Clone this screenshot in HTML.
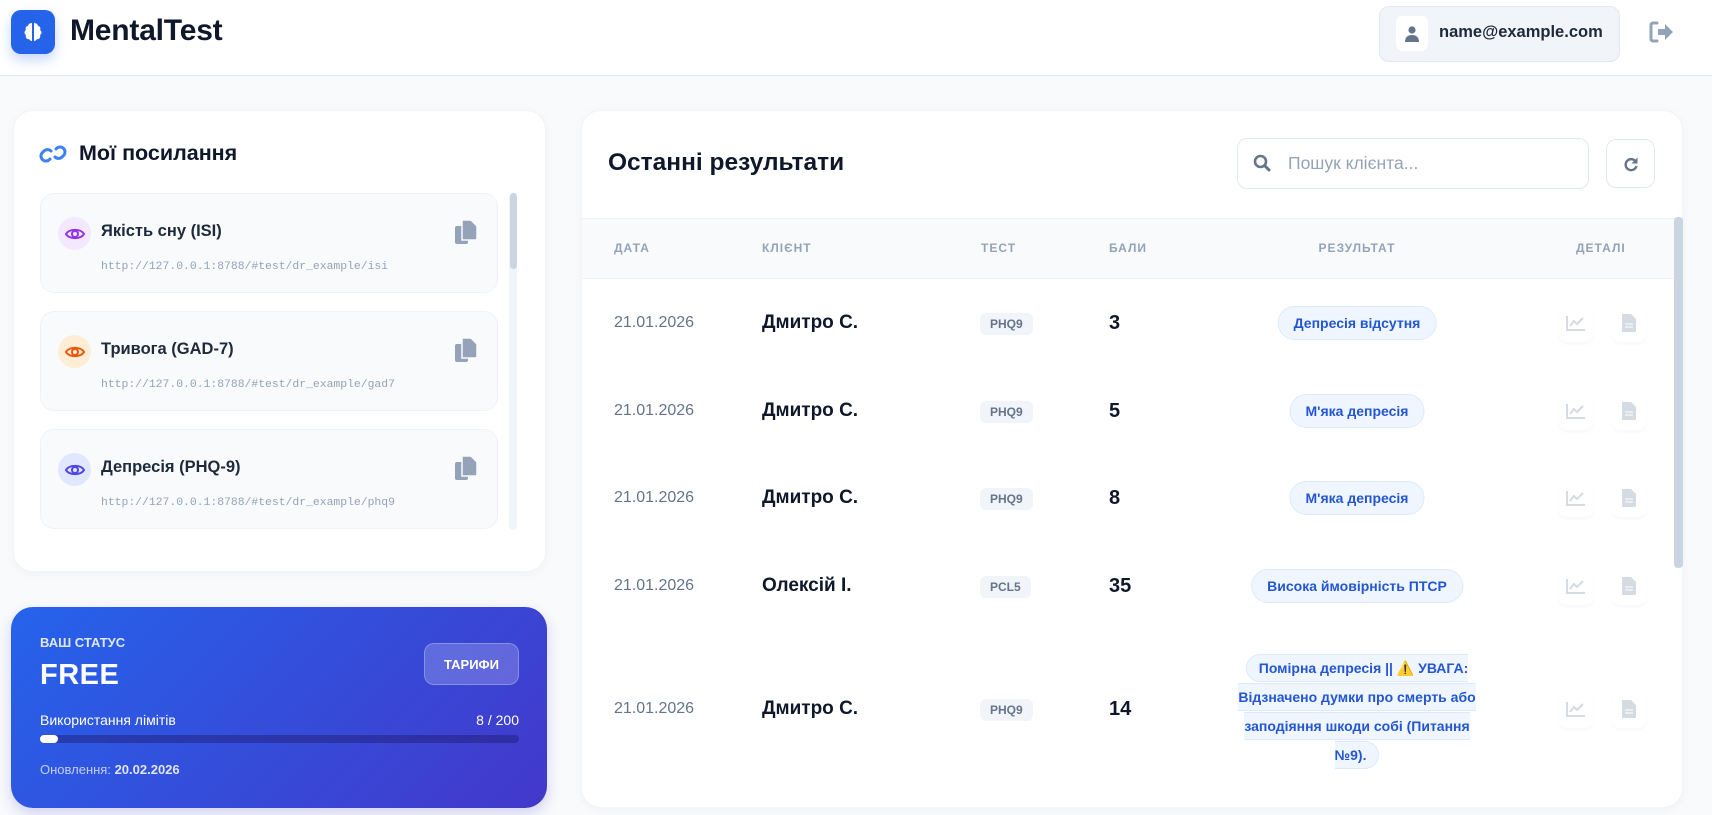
<!DOCTYPE html>
<html><head><meta charset="utf-8"><style>
*{box-sizing:border-box;margin:0;padding:0}
body{width:1712px;height:815px;overflow:hidden;background:#f8fafc;font-family:"Liberation Sans","Noto Sans CJK SC",sans-serif;color:#1e293b;position:relative}
.a{position:absolute}
.hdr{left:0;top:0;width:1712px;height:76px;background:#fff;border-bottom:1px solid #e2e8f0}
.card{background:#fff;border-radius:20px;box-shadow:0 2px 10px rgba(15,23,42,.04);border:1px solid #f1f5f9}
.item{left:40px;width:458px;height:100px;background:#f8fafc;border:1px solid #eef2f6;border-radius:14px}
.eye{left:17px;top:23px;width:33px;height:33px;border-radius:50%;display:flex;align-items:center;justify-content:center}
.it{left:60px;top:28px;font-size:16.5px;font-weight:bold;color:#1e293b}
.url{left:60px;top:67px;font-family:"Liberation Mono",monospace;font-size:11.4px;color:#94a3b8}
.cp{left:414px;top:26px}
.th{top:241px;font-size:12px;font-weight:bold;color:#94a3b8;letter-spacing:1px}
.date{font-size:16px;color:#64748b}
.name{font-size:19px;font-weight:bold;color:#0f172a}
.tb{font-size:12px;font-weight:bold;color:#64748b;background:#f1f5f9;border-radius:6px;padding:4px 10px}
.sc{font-size:20px;font-weight:bold;color:#0f172a}
.rb{font-size:14px;font-weight:bold;color:#2456d3;background:#eff6ff;border:1px solid #dbeafe;border-radius:17px;padding:8px 15px;white-space:nowrap}
.ib{width:34px;height:38px;display:flex;align-items:center;justify-content:center;border-radius:8px;box-shadow:0 2px 3px rgba(0,0,0,.03)}
</style></head><body>
<div class="a hdr"></div>
<div class="a" style="left:11px;top:10px;width:44px;height:44px;border-radius:10px;background:#2563eb;box-shadow:0 6px 12px rgba(37,99,235,.25);display:flex;align-items:center;justify-content:center">
<svg width="24" height="24" viewBox="0 0 24 24"><path d="M11 3C8 3 7 5 7 6 5 6 4 8 5 10 3 11 3 14 5 15 4 17 6 20 8 19 9 21 11 21 11 21Z M13 3C16 3 17 5 17 6 19 6 20 8 19 10 21 11 21 14 19 15 20 17 18 20 16 19 15 21 13 21 13 21Z" fill="#fff"/></svg></div>
<div class="a" style="left:70px;top:14px;font-size:30px;font-weight:bold;color:#0f172a;letter-spacing:-.2px">MentalTest</div>
<div class="a" style="left:1379px;top:6px;width:241px;height:56px;background:#f1f5f9;border:1px solid #e2e8f0;border-radius:10px"></div>
<div class="a" style="left:1396px;top:16px;width:32px;height:35px;background:#fff;border-radius:7px;display:flex;align-items:center;justify-content:center">
<svg width="14" height="16" viewBox="0 0 14 16"><circle cx="7" cy="4" r="3.6" fill="#64748b"/><path d="M0 16c0-5 3-7 7-7s7 2 7 7z" fill="#64748b"/></svg></div>
<div class="a" style="left:1439px;top:23px;font-size:16.5px;font-weight:bold;color:#1e293b">name@example.com</div>
<svg class="a" style="left:1648px;top:20px" width="26" height="24" viewBox="0 0 26 24"><path d="M9 3H5a2 2 0 0 0-2 2v14a2 2 0 0 0 2 2h4" stroke="#94a3b8" stroke-width="3" fill="none" stroke-linecap="round"/><path d="M10 9h7V4l8 8-8 8v-5h-7z" fill="#94a3b8"/></svg>

<!-- left card -->
<div class="a card" style="left:13px;top:110px;width:533px;height:462px"></div>
<svg class="a" style="left:39px;top:142px" width="28" height="24" viewBox="0 0 28 24"><g fill="none" stroke="#3b82f6" stroke-width="3" stroke-linecap="round"><path d="M12 9a5 5 0 0 0-7 0l-2 2a5 5 0 0 0 7 7l1-1"/><path d="M16 15a5 5 0 0 0 7 0l2-2a5 5 0 0 0-7-7l-1 1"/></g></svg>
<div class="a" style="left:79px;top:141px;font-size:21.5px;font-weight:bold;color:#0f172a">Мої посилання</div>

<div class="a item" style="top:193px"><div class="a eye" style="background:#f3e8ff"><svg width="20" height="14" viewBox="0 0 20 14"><path d="M1 7C4 1.5 16 1.5 19 7 16 12.5 4 12.5 1 7z" fill="none" stroke="#9333ea" stroke-width="2"/><circle cx="10" cy="7" r="3" fill="none" stroke="#9333ea" stroke-width="2"/></svg></div><div class="a it">Якість сну (ISI)</div><div class="a url">http://127.0.0.1:8788/#test/dr_example/isi</div><svg class="a cp" width="22" height="24" viewBox="0 0 22 24"><rect x="0" y="6" width="13" height="18" rx="2" fill="#94a3b8"/><path d="M7 0h9l6 6v12a2 2 0 0 1-2 2h-13z" fill="#94a3b8" stroke="#f8fafc" stroke-width="1.5"/></svg></div>
<div class="a item" style="top:311px"><div class="a eye" style="background:#ffedd5"><svg width="20" height="14" viewBox="0 0 20 14"><path d="M1 7C4 1.5 16 1.5 19 7 16 12.5 4 12.5 1 7z" fill="none" stroke="#ea580c" stroke-width="2"/><circle cx="10" cy="7" r="3" fill="none" stroke="#ea580c" stroke-width="2"/></svg></div><div class="a it">Тривога (GAD-7)</div><div class="a url">http://127.0.0.1:8788/#test/dr_example/gad7</div><svg class="a cp" width="22" height="24" viewBox="0 0 22 24"><rect x="0" y="6" width="13" height="18" rx="2" fill="#94a3b8"/><path d="M7 0h9l6 6v12a2 2 0 0 1-2 2h-13z" fill="#94a3b8" stroke="#f8fafc" stroke-width="1.5"/></svg></div>
<div class="a item" style="top:429px"><div class="a eye" style="background:#e0e7ff"><svg width="20" height="14" viewBox="0 0 20 14"><path d="M1 7C4 1.5 16 1.5 19 7 16 12.5 4 12.5 1 7z" fill="none" stroke="#4f46e5" stroke-width="2"/><circle cx="10" cy="7" r="3" fill="none" stroke="#4f46e5" stroke-width="2"/></svg></div><div class="a it">Депресія (PHQ-9)</div><div class="a url">http://127.0.0.1:8788/#test/dr_example/phq9</div><svg class="a cp" width="22" height="24" viewBox="0 0 22 24"><rect x="0" y="6" width="13" height="18" rx="2" fill="#94a3b8"/><path d="M7 0h9l6 6v12a2 2 0 0 1-2 2h-13z" fill="#94a3b8" stroke="#f8fafc" stroke-width="1.5"/></svg></div>
<div class="a" style="left:509px;top:193px;width:8px;height:337px;background:#f1f5f9;border-radius:4px"></div>
<div class="a" style="left:510px;top:193px;width:7px;height:76px;background:#cbd5e1;border-radius:4px"></div>

<!-- status card -->
<div class="a" style="left:11px;top:607px;width:536px;height:201px;border-radius:22px;background:linear-gradient(135deg,#2563eb,#4338ca);box-shadow:0 6px 14px rgba(67,56,202,.2);color:#fff">
<div class="a" style="left:29px;top:28px;font-size:13px;font-weight:bold;color:#e0e7ff">ВАШ СТАТУС</div>
<div class="a" style="left:29px;top:52px;font-size:29px;font-weight:900;letter-spacing:.5px">FREE</div>
<div class="a" style="left:413px;top:36px;width:95px;height:42px;border-radius:10px;background:rgba(255,255,255,.2);border:1px solid rgba(255,255,255,.25);display:flex;align-items:center;justify-content:center;font-size:13px;font-weight:bold">ТАРИФИ</div>
<div class="a" style="left:29px;top:105px;font-size:14px">Використання лімітів</div>
<div class="a" style="right:28px;top:105px;font-size:14px">8 / 200</div>
<div class="a" style="left:29px;top:128px;width:479px;height:8px;border-radius:4px;background:rgba(30,27,110,.45)"></div>
<div class="a" style="left:29px;top:128px;width:18px;height:8px;border-radius:4px;background:#fff"></div>
<div class="a" style="left:29px;top:155px;font-size:13px;color:rgba(255,255,255,.7)">Оновлення: <b style="color:rgba(255,255,255,.85)">20.02.2026</b></div>
</div>

<!-- main card -->
<div class="a card" style="left:581px;top:110px;width:1102px;height:698px;overflow:hidden">
<div class="a" style="left:0;top:107px;width:1102px;height:61px;background:#f8fafc;border-top:1px solid #eef2f6;border-bottom:1px solid #eef2f6"></div>
</div>
<div class="a" style="left:608px;top:149px;font-size:24.5px;font-weight:bold;color:#0f172a">Останні результати</div>
<div class="a" style="left:1237px;top:138px;width:352px;height:51px;background:#fff;border:1px solid #e2e8f0;border-radius:10px"></div>
<svg class="a" style="left:1253px;top:154px" width="18" height="18" viewBox="0 0 18 18"><circle cx="7.5" cy="7.5" r="5.5" fill="none" stroke="#64748b" stroke-width="2.6"/><path d="M11.5 11.5l4.5 4.5" stroke="#64748b" stroke-width="3" stroke-linecap="round"/></svg>
<div class="a" style="left:1288px;top:153px;font-size:17.5px;color:#94a3b8">Пошук клієнта...</div>
<div class="a" style="left:1606px;top:139px;width:49px;height:49px;background:#fff;border:1px solid #e2e8f0;border-radius:10px;display:flex;align-items:center;justify-content:center">
<svg width="16" height="16" viewBox="0 0 16 16"><path d="M13 6A5.5 5.5 0 1 0 13.5 10" fill="none" stroke="#64748b" stroke-width="2.4"/><path d="M14.5 1.5v6h-6z" fill="#64748b"/></svg></div>

<div class="a th" style="left:614px">ДАТА</div>
<div class="a th" style="left:762px">КЛІЄНТ</div>
<div class="a th" style="left:981px">ТЕСТ</div>
<div class="a th" style="left:1109px">БАЛИ</div>
<div class="a th" style="left:1357px;transform:translateX(-50%)">РЕЗУЛЬТАТ</div>
<div class="a th" style="left:1576px">ДЕТАЛІ</div>
<div class="a" style="left:1674px;top:217px;width:9px;height:351px;background:#cbd5e1;border-radius:4px"></div>

<div class="a date" style="left:614px;top:314px">21.01.2026</div><div class="a name" style="left:762px;top:312px">Дмитро С.</div><div class="a tb" style="left:980px;top:313px">PHQ9</div><div class="a sc" style="left:1109px;top:312px">3</div><div class="a rb" style="left:1357px;top:306px;transform:translateX(-50%)">Депресія відсутня</div>
<div class="a date" style="left:614px;top:402px">21.01.2026</div><div class="a name" style="left:762px;top:400px">Дмитро С.</div><div class="a tb" style="left:980px;top:401px">PHQ9</div><div class="a sc" style="left:1109px;top:400px">5</div><div class="a rb" style="left:1357px;top:394px;transform:translateX(-50%)">М'яка депресія</div>
<div class="a date" style="left:614px;top:489px">21.01.2026</div><div class="a name" style="left:762px;top:487px">Дмитро С.</div><div class="a tb" style="left:980px;top:488px">PHQ9</div><div class="a sc" style="left:1109px;top:487px">8</div><div class="a rb" style="left:1357px;top:481px;transform:translateX(-50%)">М'яка депресія</div>
<div class="a date" style="left:614px;top:577px">21.01.2026</div><div class="a name" style="left:762px;top:575px">Олексій І.</div><div class="a tb" style="left:980px;top:576px">PCL5</div><div class="a sc" style="left:1109px;top:575px">35</div><div class="a rb" style="left:1357px;top:569px;transform:translateX(-50%)">Висока ймовірність ПТСР</div>
<div class="a date" style="left:614px;top:700px">21.01.2026</div><div class="a name" style="left:762px;top:698px">Дмитро С.</div><div class="a tb" style="left:980px;top:699px">PHQ9</div><div class="a sc" style="left:1109px;top:698px">14</div>
<div class="a" style="left:1225px;top:654px;width:264px;text-align:center;font-size:14px;font-weight:bold;line-height:29px;color:#2456d3"><span style="background:#eff6ff;border:1px solid #dbeafe;border-radius:16px;padding:5px 12px">Помірна депресія || ⚠️ УВАГА: Відзначено думки про смерть або заподіяння шкоди собі (Питання №9).</span></div>

<div class="a ib" style="left:1559px;top:304px"><svg width="20" height="16"><path d="M1 1v14h18" stroke="#d5dbe3" stroke-width="2" fill="none"/><path d="M4 11l4-5 3 3 6-6" stroke="#d5dbe3" stroke-width="2" fill="none"/></svg></div><div class="a ib" style="left:1612px;top:304px"><svg width="14" height="18"><path d="M0 1a1 1 0 0 1 1-1h8l5 5v12a1 1 0 0 1-1 1H1a1 1 0 0 1-1-1z" fill="#d5dbe3"/><path d="M3 10h8M3 13h8" stroke="#fff" stroke-width="1"/></svg></div>
<div class="a ib" style="left:1559px;top:392px"><svg width="20" height="16"><path d="M1 1v14h18" stroke="#d5dbe3" stroke-width="2" fill="none"/><path d="M4 11l4-5 3 3 6-6" stroke="#d5dbe3" stroke-width="2" fill="none"/></svg></div><div class="a ib" style="left:1612px;top:392px"><svg width="14" height="18"><path d="M0 1a1 1 0 0 1 1-1h8l5 5v12a1 1 0 0 1-1 1H1a1 1 0 0 1-1-1z" fill="#d5dbe3"/><path d="M3 10h8M3 13h8" stroke="#fff" stroke-width="1"/></svg></div>
<div class="a ib" style="left:1559px;top:479px"><svg width="20" height="16"><path d="M1 1v14h18" stroke="#d5dbe3" stroke-width="2" fill="none"/><path d="M4 11l4-5 3 3 6-6" stroke="#d5dbe3" stroke-width="2" fill="none"/></svg></div><div class="a ib" style="left:1612px;top:479px"><svg width="14" height="18"><path d="M0 1a1 1 0 0 1 1-1h8l5 5v12a1 1 0 0 1-1 1H1a1 1 0 0 1-1-1z" fill="#d5dbe3"/><path d="M3 10h8M3 13h8" stroke="#fff" stroke-width="1"/></svg></div>
<div class="a ib" style="left:1559px;top:567px"><svg width="20" height="16"><path d="M1 1v14h18" stroke="#d5dbe3" stroke-width="2" fill="none"/><path d="M4 11l4-5 3 3 6-6" stroke="#d5dbe3" stroke-width="2" fill="none"/></svg></div><div class="a ib" style="left:1612px;top:567px"><svg width="14" height="18"><path d="M0 1a1 1 0 0 1 1-1h8l5 5v12a1 1 0 0 1-1 1H1a1 1 0 0 1-1-1z" fill="#d5dbe3"/><path d="M3 10h8M3 13h8" stroke="#fff" stroke-width="1"/></svg></div>
<div class="a ib" style="left:1559px;top:690px"><svg width="20" height="16"><path d="M1 1v14h18" stroke="#d5dbe3" stroke-width="2" fill="none"/><path d="M4 11l4-5 3 3 6-6" stroke="#d5dbe3" stroke-width="2" fill="none"/></svg></div><div class="a ib" style="left:1612px;top:690px"><svg width="14" height="18"><path d="M0 1a1 1 0 0 1 1-1h8l5 5v12a1 1 0 0 1-1 1H1a1 1 0 0 1-1-1z" fill="#d5dbe3"/><path d="M3 10h8M3 13h8" stroke="#fff" stroke-width="1"/></svg></div>
</body></html>
